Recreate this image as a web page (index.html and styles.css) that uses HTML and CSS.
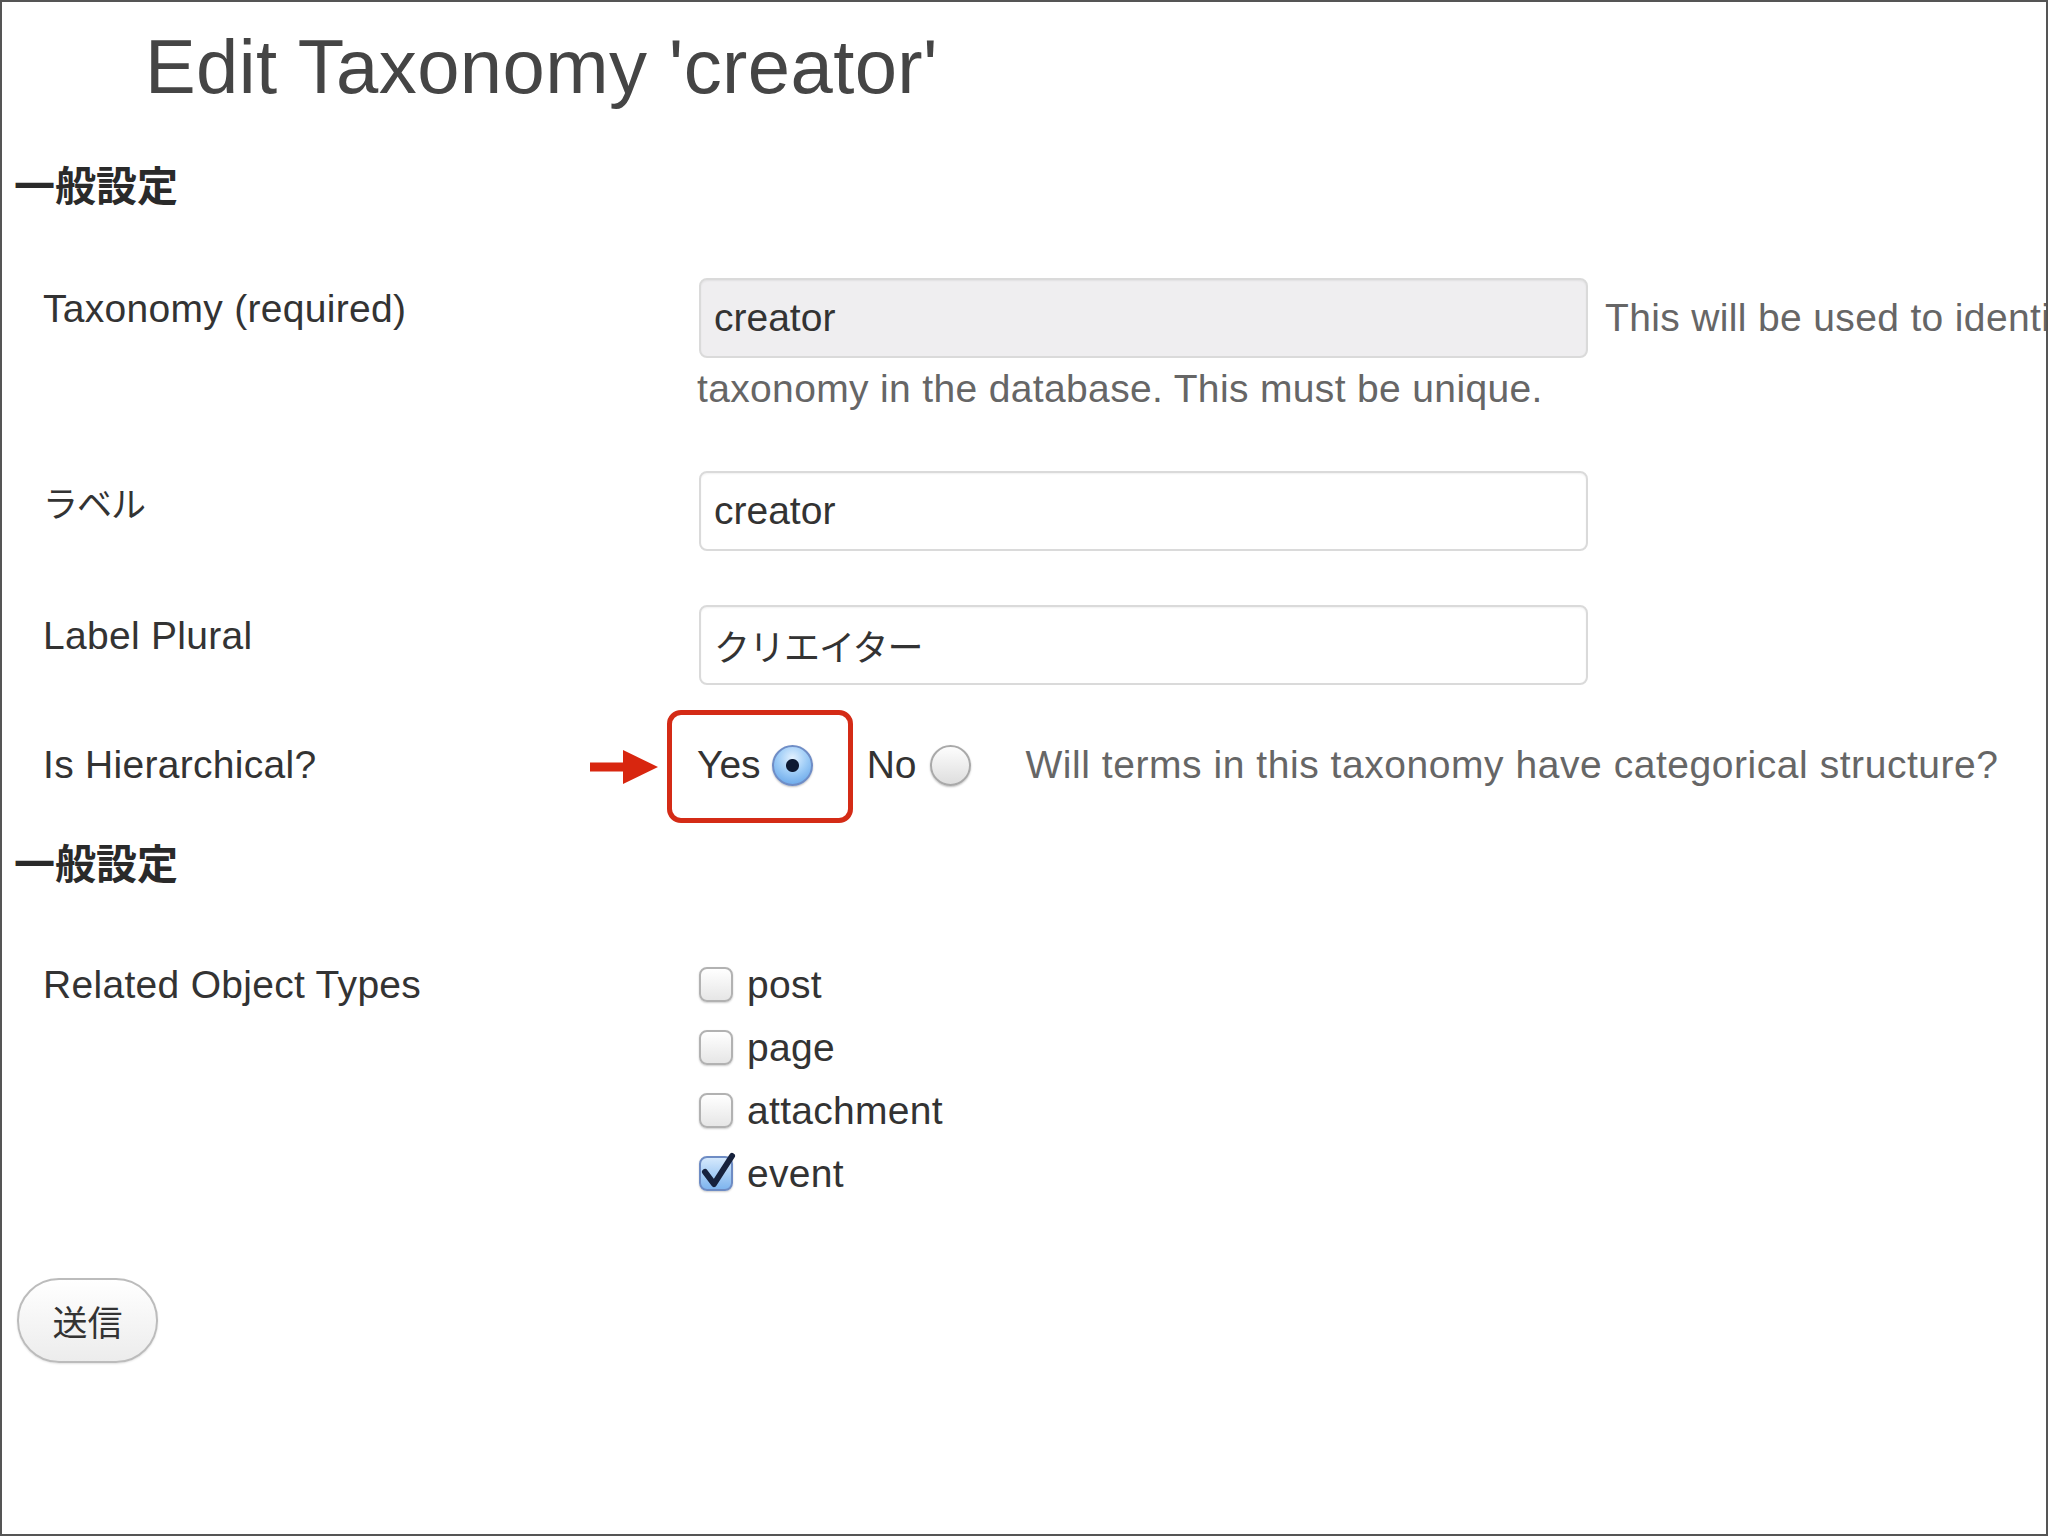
FILE: index.html
```html
<!DOCTYPE html>
<html lang="ja">
<head>
<meta charset="utf-8">
<title>Edit Taxonomy 'creator'</title>
<link rel="stylesheet" href="styles.css">
</head>
<body>
<div class="frame">
  <h1 class="page-title">Edit Taxonomy 'creator'</h1>

  <h2 class="section-title first">一般設定</h2>

  <div class="row row-taxonomy">
    <div class="label">Taxonomy (required)</div>
    <div class="field">
      <div class="field-line">
        <input class="text-input readonly" type="text" value="creator" readonly>
        <span class="desc nowrap">This will be used to identify this</span>
      </div>
      <p class="desc desc-cont">taxonomy in the database. This must be unique.</p>
    </div>
  </div>

  <div class="row row-label">
    <div class="label"><span class="ja">ラベル</span></div>
    <div class="field">
      <input class="text-input" type="text" value="creator">
    </div>
  </div>

  <div class="row row-plural">
    <div class="label">Label Plural</div>
    <div class="field">
      <input class="text-input ja-input" type="text" value="クリエイター">
    </div>
  </div>

  <div class="row row-hier">
    <div class="label label-mid">Is Hierarchical?</div>
    <div class="field field-radios">
      <svg class="annot-arrow" width="68" height="34" viewBox="0 0 68 34" aria-hidden="true">
        <rect x="0" y="12.5" width="38" height="9" fill="#d8260f"/>
        <polygon points="33,0 68,17 33,34" fill="#d8260f"/>
      </svg>
      <span class="annot-box" aria-hidden="true"></span>
      <label class="radio-item yes">Yes<input class="radio" type="radio" name="hier" checked></label>
      <label class="radio-item no">No<input class="radio" type="radio" name="hier"></label>
      <span class="desc nowrap wide">Will terms in this taxonomy have categorical structure?</span>
    </div>
  </div>

  <h2 class="section-title second">一般設定</h2>

  <div class="row row-types">
    <div class="label label-tall">Related Object Types</div>
    <div class="field checklist">
      <label class="check-item"><span class="checkbox"></span>post</label>
      <label class="check-item"><span class="checkbox"></span>page</label>
      <label class="check-item"><span class="checkbox"></span>attachment</label>
      <label class="check-item"><span class="checkbox checked"><svg class="tick" width="44" height="44" viewBox="0 0 44 44" aria-hidden="true"><path d="M8 22 L17 34 L35 6" fill="none" stroke="#17223d" stroke-width="6" stroke-linecap="round" stroke-linejoin="round"/></svg></span>event</label>
    </div>
  </div>

  <button class="submit" type="button">送信</button>
</div>
</body>
</html>
```

FILE: styles.css
```css
html, body {
  margin: 0;
  padding: 0;
  background: #fff;
}

.frame {
  position: relative;
  width: 2048px;
  height: 1536px;
  box-sizing: border-box;
  border: 2px solid #555;
  overflow: hidden;
  background: #fff;
  font-family: "Liberation Sans", Arial, "Noto Sans CJK JP", sans-serif;
  color: #333;
  display: flex;
  flex-direction: column;
  align-items: flex-start;
}

.page-title {
  margin: 22px 0 0 143px;
  font-size: 76px;
  line-height: 86px;
  letter-spacing: 0.4px;
  font-weight: normal;
  color: #454545;
  white-space: nowrap;
}

.section-title {
  margin: 0 0 0 12px;
  font-family: "Noto Sans CJK JP", sans-serif;
  font-size: 41px;
  line-height: 48px;
  font-weight: bold;
  color: #2a2a2a;
}
.section-title.first { margin-top: 49px; }
.section-title.second { margin-top: 49px; }

.row {
  display: grid;
  grid-template-columns: 654px auto;
  padding-left: 41px;
  align-items: start;
}
.row-taxonomy { margin-top: 71px; }
.row-label { margin-top: 59px; }
.row-plural { margin-top: 54px; }
.row-hier { margin-top: 57px; align-items: center; }
.row-types { margin-top: 68px; }

.label {
  font-family: "Liberation Sans", Arial, "Noto Sans CJK JP", sans-serif;
  font-size: 39px;
  line-height: 46px;
  letter-spacing: 0.3px;
  padding-top: 8px;
  color: #333;
  white-space: nowrap;
}
.label .ja {
  font-family: "Noto Sans CJK JP", sans-serif;
  font-size: 35px;
  letter-spacing: -1px;
}
.label-mid { padding-top: 0; }
.label-tall { padding-top: 0; line-height: 63px; }

.field {
  font-size: 39px;
  line-height: 46px;
}

.field-line {
  display: flex;
  align-items: center;
  gap: 17px;
}

.text-input {
  box-sizing: border-box;
  width: 889px;
  height: 80px;
  margin: 0 0 0 2px;
  padding: 0 0 0 13px;
  border: 2px solid #dadada;
  border-radius: 8px;
  background: #fff;
  box-shadow: inset 0 1px 2px rgba(0, 0, 0, 0.06);
  font-family: "Liberation Sans", Arial, "Noto Sans CJK JP", sans-serif;
  font-size: 39px;
  color: #333;
  outline: none;
}
.text-input.readonly {
  background: #efeef0;
}
.text-input.ja-input {
  font-family: "Noto Sans CJK JP", sans-serif;
  font-size: 36px;
  letter-spacing: -1px;
}

.desc {
  color: #666;
  font-size: 39px;
  line-height: 46px;
  letter-spacing: 0.35px;
}
.desc.wide { letter-spacing: 0.55px; }
.nowrap { white-space: nowrap; }
.desc-cont {
  margin: 8px 0 0 0;
}

.field-radios {
  position: relative;
  display: flex;
  align-items: center;
  height: 46px;
}

.radio-item {
  display: flex;
  align-items: center;
  color: #333;
  font-size: 39px;
  line-height: 46px;
}
.radio-item.yes { margin-right: 54px; }
.radio-item.no { margin-right: 54px; }

.radio {
  appearance: none;
  -webkit-appearance: none;
  box-sizing: border-box;
  width: 41px;
  height: 41px;
  margin: 0 0 0 11px;
  border-radius: 50%;
  border: 2px solid #a9a9a9;
  background: linear-gradient(#fdfdfd, #dedede);
  box-shadow: 0 1px 2px rgba(0, 0, 0, 0.25);
}
.radio-item.no .radio { margin-left: 14px; }
.radio:checked {
  border-color: #6f8dc6;
  background:
    radial-gradient(circle, #0e1a33 0 6px, rgba(14, 26, 51, 0) 7px),
    radial-gradient(circle at 50% 30%, #e3f1ff 0%, #9fcdf7 45%, #5a9de6 100%);
}

.annot-arrow {
  position: absolute;
  left: -107px;
  top: 8px;
}
.annot-box {
  position: absolute;
  left: -30px;
  top: -32px;
  width: 186px;
  height: 113px;
  box-sizing: border-box;
  border: 5px solid #d42b16;
  border-radius: 14px;
}

.checklist {
  display: flex;
  flex-direction: column;
}
.check-item {
  display: flex;
  align-items: center;
  height: 63px;
  font-size: 39px;
  letter-spacing: 0.3px;
  color: #333;
}

.checkbox {
  position: relative;
  box-sizing: border-box;
  width: 34px;
  height: 35px;
  margin: 0 14px 0 2px;
  border: 2px solid #b2b2b2;
  border-radius: 8px;
  background: linear-gradient(#ffffff, #e6e6e6);
  box-shadow: 0 1px 2px rgba(0, 0, 0, 0.2);
}
.checkbox.checked {
  border-color: #6e8cc4;
  background: linear-gradient(#d5e9fd, #7fb5ee);
}
.tick {
  position: absolute;
  left: -4px;
  top: -8px;
}

.submit {
  margin: 73px 0 0 15px;
  box-sizing: border-box;
  width: 141px;
  height: 85px;
  border: 2px solid #bcbcbc;
  border-radius: 42px;
  background: linear-gradient(#ffffff, #ececec);
  box-shadow: 0 1px 2px rgba(0, 0, 0, 0.12);
  font-family: "Noto Sans CJK JP", sans-serif;
  font-size: 35px;
  color: #333;
  padding: 0;
}
```
